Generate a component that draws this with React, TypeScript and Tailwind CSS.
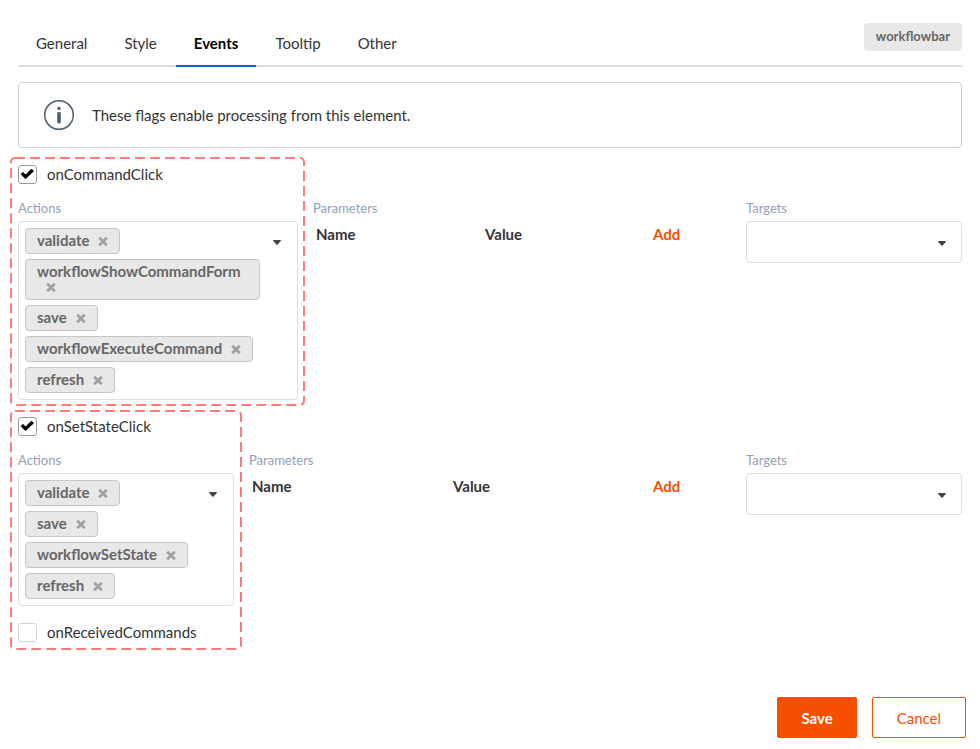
import { useId, useState } from "react"
import clsx from "clsx"

const tabs = ["General", "Style", "Events", "Tooltip", "Other"]

function Caret({ className }: { className?: string }) {
  return (
    <svg className={clsx("h-[5px] w-2", className)} viewBox="0 0 8 5" fill="#444" aria-hidden="true">
      <path d="M.6 0h6.8c.5 0 .7.6.4 1L4.6 4.4c-.3.4-.9.4-1.2 0L.2 1C-.1.6.1 0 .6 0z" />
    </svg>
  )
}

function RemoveIcon() {
  return (
    <svg className="h-[9px] w-[10px]" viewBox="0 0 10 9" stroke="#a0a0a0" strokeWidth="2.8" aria-hidden="true">
      <path d="M1.2 .8l7.6 7.4M8.8 .8L1.2 8.2" />
    </svg>
  )
}

function InfoIcon() {
  return (
    <svg className="size-8 shrink-0" viewBox="0 0 32 32" fill="none" aria-hidden="true">
      <circle cx="16" cy="16" r="14.3" stroke="#4d5d6b" strokeWidth="1.5" />
      <circle cx="16" cy="9.4" r="1.7" fill="#4d5d6b" />
      <rect x="14.2" y="13" width="3.6" height="11.4" rx="1.4" fill="#4d5d6b" />
    </svg>
  )
}

function Highlight({ className }: { className?: string }) {
  return (
    <svg className={clsx("pointer-events-none absolute overflow-visible", className)} aria-hidden="true">
      <rect
        x="1"
        y="1"
        width="100%"
        height="100%"
        rx="4"
        fill="none"
        stroke="#ff7b7b"
        strokeWidth="2"
        strokeDasharray="10 5"
      />
    </svg>
  )
}

function CheckField({ label, defaultChecked = false }: { label: string; defaultChecked?: boolean }) {
  const [checked, setChecked] = useState(defaultChecked)
  return (
    <label className="flex h-[19px] items-start gap-2.5 leading-[18px] text-[#333]">
      <span className="relative flex">
        <input
          type="checkbox"
          checked={checked}
          onChange={(e) => setChecked(e.target.checked)}
          className="size-[19px] appearance-none rounded-[3px] border border-[#d4d4d5] bg-white checked:border-[#999]"
        />
        {checked && (
          <svg
            className="pointer-events-none absolute inset-0 size-[19px]"
            viewBox="0 0 19 19"
            fill="#000"
            aria-hidden="true"
          >
            <path d="M2.9 8.9l1.7-1.7c.2-.2.5-.2.7 0l2.3 2.3 5.6-5.4c.2-.2.5-.2.7 0l1.7 1.7c.2.2.2.5 0 .7l-7.7 7.3c-.2.2-.5.2-.7 0L2.9 9.6c-.2-.2-.2-.5 0-.7z" />
          </svg>
        )}
      </span>
      {label}
    </label>
  )
}

function ActionsField({ actions }: { actions: string[] }) {
  return (
    <div className="mt-4">
      <div className="mb-[5px] text-[13px] leading-4 text-[#94a0b4]">Actions</div>
      <div className="relative rounded border border-[#dededf] py-1.5 pr-[37px] pl-1.5">
        <ul className="flex flex-col items-start gap-[5px]">
          {actions.map((action) => (
            <li
              key={action}
              className="rounded border border-[#c6c6c6] bg-[#e8e8e8] px-[11px] pt-1 pb-[5px] text-[15px] leading-[15px] font-bold text-[#666]"
            >
              {action}
              <button type="button" aria-label={`Remove ${action}`} className="ml-[9px] inline-block align-baseline">
                <RemoveIcon />
              </button>
            </li>
          ))}
        </ul>
        <button type="button" aria-label="Open actions" className="absolute top-2.5 right-3 flex p-1 pt-2">
          <Caret />
        </button>
      </div>
    </div>
  )
}

function ParametersField() {
  return (
    <div className="min-w-0 flex-1 pt-[35px]">
      <div className="text-[13px] leading-4 text-[#94a0b4]">Parameters</div>
      <table className="mt-2 w-full table-fixed text-left text-[15px] leading-5 text-[#333]">
        <thead>
          <tr>
            <th className="pl-[3px] font-bold">Name</th>
            <th className="pl-[3px] font-bold">Value</th>
            <th className="w-20 pl-[2px] font-bold">
              <button type="button" className="text-[#f64f00]">
                Add
              </button>
            </th>
          </tr>
        </thead>
      </table>
    </div>
  )
}

function TargetsField() {
  const id = useId()
  return (
    <div className="w-[216px] shrink-0 pt-[35px]">
      <label htmlFor={id} className="mb-[5px] block text-[13px] leading-4 text-[#94a0b4]">
        Targets
      </label>
      <div className="relative">
        <select id={id} className="block h-[42px] w-full appearance-none rounded border border-[#dededf] bg-white px-3">
          <option value=""></option>
        </select>
        <Caret className="pointer-events-none absolute top-5 right-4" />
      </div>
    </div>
  )
}

export default function App() {
  const [active, setActive] = useState("Events")

  return (
    <div className="min-h-screen bg-white pb-[11px] font-['Lato',sans-serif] text-[15px] leading-5 text-[#333]">
      <main className="px-[18px]">
        {/* Tabs */}
        <header className="flex items-start justify-between border-b-2 border-[#dcdcdc] pt-[23px]">
          <nav className="-mb-0.5 flex gap-px" role="tablist">
            {tabs.map((tab) => (
              <button
                key={tab}
                type="button"
                role="tab"
                aria-selected={tab === active}
                onClick={() => setActive(tab)}
                className={clsx(
                  "border-b-2 px-[18px] pt-2.5 pb-3",
                  tab === active ? "border-[#1264e3] font-bold text-black" : "border-transparent",
                )}
              >
                {tab}
              </button>
            ))}
          </nav>
          <span className="rounded bg-[#e8e8e8] px-3 pt-[3px] pb-[5px] text-[13px] font-bold text-[#666]">
            workflowbar
          </span>
        </header>

        {/* Info message */}
        <div className="mt-[15px] flex h-[66px] items-center gap-[17px] rounded border border-[#cfcfcf] px-6">
          <InfoIcon />
          <p>These flags enable processing from this element.</p>
        </div>

        {/* onCommandClick */}
        <section className="mt-[17px] flex items-start gap-[15px]">
          <div className="relative w-[280px] shrink-0">
            <Highlight className="-top-2 -left-2 h-[calc(100%+12px)] w-[calc(100%+13px)]" />
            <CheckField label="onCommandClick" defaultChecked />
            <ActionsField
              actions={["validate", "workflowShowCommandForm", "save", "workflowExecuteCommand", "refresh"]}
            />
          </div>
          <ParametersField />
          <TargetsField />
        </section>

        {/* onSetStateClick */}
        <section className="mt-[17px] flex items-start gap-[15px]">
          <div className="relative w-[216px] shrink-0">
            <Highlight className="-top-[7px] -left-2 h-[calc(100%+13px)] w-[calc(100%+14px)]" />
            <CheckField label="onSetStateClick" defaultChecked />
            <ActionsField actions={["validate", "save", "workflowSetState", "refresh"]} />
            <div className="mt-[17px]">
              <CheckField label="onReceivedCommands" />
            </div>
          </div>
          <ParametersField />
          <TargetsField />
        </section>
      </main>

      <footer className="mt-[55px] flex justify-end gap-[15px] px-3.5">
        <button type="button" className="h-[41px] rounded-[2px] bg-[#f64f00] px-6 font-bold text-white">
          Save
        </button>
        <button
          type="button"
          className="h-[41px] rounded-[2px] border border-[#f64f00] bg-white px-6 text-[#f64f00]"
        >
          Cancel
        </button>
      </footer>
    </div>
  )
}
